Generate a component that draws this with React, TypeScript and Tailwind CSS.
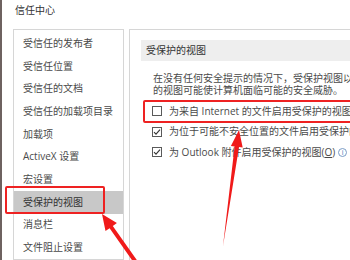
import React from 'react';

const navItems: string[] = [
    '受信任的发布者',
    '受信任位置',
    '受信任的文档',
    '受信任的加载项目录',
    '加载项',
    'ActiveX 设置',
    '宏设置',
    '受保护的视图',
    '消息栏',
    '文件阻止设置',
];

const CheckBox: React.FC<{ checked: boolean }> = ({ checked }) => (
    <span className="w-[10px] h-[10px] border border-[#5a5a5a] bg-white flex items-center justify-center shrink-0">
        {checked && (
            <svg width="8" height="8" viewBox="0 0 8 8">
                <polyline points="1,4.2 3,6.2 7,1.6" fill="none" stroke="#333" strokeWidth="1.1" />
            </svg>
        )}
    </span>
);

const App: React.FC = () => {
    return (
        <div
            className="relative w-[350px] h-[260px] overflow-hidden bg-white flex text-[#4a4a4a] text-[10px]"
            style={{ fontFamily: '"Open Sans", "Noto Sans CJK SC", sans-serif' }}
        >
            {/* window edge */}
            <div className="w-[2px] h-full bg-[#6e6260] shrink-0" />

            <div className="flex flex-col flex-1 pl-[11px]">
                <div className="h-[30px] flex items-start pt-[3px] pl-[2px] text-[10px] leading-[14px] text-[#333]">
                    信任中心
                </div>

                <div className="flex flex-1 gap-[5px]">
                    {/* Left nav */}
                    <div className="w-[111px] shrink-0 border border-[#d6d6d6] pt-[2px]">
                        {navItems.map((item) => (
                            <div
                                key={item}
                                className={`h-[22.7px] flex items-center pl-[9px] whitespace-nowrap ${
                                    item === '受保护的视图' ? 'bg-[#c8c8c8] text-[#333]' : ''
                                }`}
                            >
                                {item}
                            </div>
                        ))}
                    </div>

                    {/* Right content */}
                    <div className="flex-1 border-l border-t border-[#d6d6d6] pt-[10px] pl-[11px] min-w-0">
                        <div className="h-[21px] bg-[#eeeeee] flex items-center pl-[5px] text-[#333] whitespace-nowrap">
                            受保护的视图
                        </div>
                        <div className="mt-[11px] pl-[12px] leading-[12px] whitespace-nowrap">
                            <div>在没有任何安全提示的情况下，受保护视图以</div>
                            <div>的视图可能使计算机面临可能的安全威胁。</div>
                        </div>
                        <div className="mt-[5px] pl-[11px] flex flex-col">
                            <div className="h-[20.5px] flex items-center gap-[7px] whitespace-nowrap">
                                <CheckBox checked={false} />
                                <span>为来自 Internet 的文件启用受保护的视图</span>
                            </div>
                            <div className="h-[20.5px] flex items-center gap-[7px] whitespace-nowrap">
                                <CheckBox checked={true} />
                                <span>为位于可能不安全位置的文件启用受保护的视图</span>
                            </div>
                            <div className="h-[20.5px] flex items-center gap-[7px] whitespace-nowrap">
                                <CheckBox checked={true} />
                                <span>
                                    为 Outlook 附件启用受保护的视图(<span className="underline">O</span>)
                                </span>
                                <span className="w-[9px] h-[9px] rounded-full border border-[#7a9cc6] text-[#4a78b8] text-[7px] leading-none flex items-center justify-center shrink-0 -ml-[4px]">
                                    i
                                </span>
                            </div>
                        </div>
                    </div>
                </div>
            </div>

            {/* annotation boxes */}
            <div className="absolute left-[5px] top-[186px] w-[100px] h-[28px] border-2 border-[#ee2222] rounded-[2px]" />
            <div className="absolute left-[143px] top-[100px] w-[220px] h-[23px] border-2 border-[#ee2222] rounded-[2px]" />

            {/* annotation arrows */}
            <svg className="absolute left-0 top-0" width="350" height="260" viewBox="0 0 350 260">
                <polygon
                    points="102,214 116.9,223.1 112.8,225.9 141.6,266.8 138.4,269.2 109.6,228.3 105.5,231.1"
                    fill="#f01a1a"
                />
                <polygon
                    points="239,130 242.7,147.6 239,147.1 223,246 234.6,146.5 230.9,146"
                    fill="#f01a1a"
                />
            </svg>
        </div>
    );
};

export default App;
